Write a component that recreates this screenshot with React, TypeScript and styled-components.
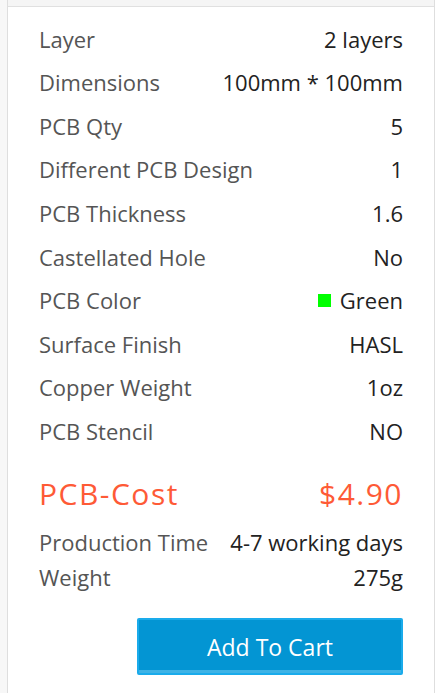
import React from "react";
import styled, { createGlobalStyle } from "styled-components";

const Global = createGlobalStyle`
  html, body { margin: 0; padding: 0; background: #ffffff; }
  body { font-family: "Open Sans", "Liberation Sans", sans-serif; }
`;

const Page = styled.div`
  display: flex;
  min-height: 693px;
  background: linear-gradient(to right, #f7f7f7 0, #f7f7f7 7px, #ffffff 7px);
`;

const Card = styled.div`
  margin-left: 7px;
  width: 426px;
  min-height: 693px;
  border-left: 1px solid #dedede;
  border-right: 1px solid #dedede;
  background: #ffffff;
  display: flex;
  flex-direction: column;
`;

const TopStrip = styled.div`
  height: 6px;
  background: #f5f5f5;
  border-bottom: 1px solid #e0e0e0;
`;

const Body = styled.div`
  padding: 10px 31px 0 31px;
  display: flex;
  flex-direction: column;
`;

const Row = styled.div`
  display: flex;
  justify-content: space-between;
  align-items: center;
  height: 43.55px;
  font-size: 22px;
`;

const Label = styled.span`
  color: #555555;
`;

const Value = styled.span`
  color: #222222;
  display: inline-flex;
  align-items: center;
  gap: 9px;
`;

const Swatch = styled.span<{ $color: string }>`
  width: 13px;
  height: 13px;
  background: ${(p) => p.$color};
  display: inline-block;
`;

const CostRow = styled.div`
  display: flex;
  justify-content: space-between;
  align-items: center;
  margin-top: 16px;
  height: 50px;
  font-size: 30px;
  color: #fe5a36;
  letter-spacing: 1.5px;
`;

const InfoList = styled.div`
  display: flex;
  flex-direction: column;
  margin-top: 6px;
`;

const InfoRow = styled.div`
  display: flex;
  justify-content: space-between;
  align-items: center;
  height: 35px;
  font-size: 22px;
`;

const ButtonRow = styled.div`
  display: flex;
  justify-content: flex-end;
  margin-top: 24px;
`;

const CartButton = styled.button`
  width: 266px;
  height: 57px;
  border: 2px solid #1aabeb;
  border-radius: 2px;
  background: #0395d3;
  box-shadow: inset 0 -3px 0 #3eb3e6;
  color: #ffffff;
  font-family: "Open Sans", "Liberation Sans", sans-serif;
  font-size: 23px;
  padding: 0;
  cursor: pointer;
`;

const specs: { label: string; value: string; swatch?: string }[] = [
  { label: "Layer", value: "2 layers" },
  { label: "Dimensions", value: "100mm * 100mm" },
  { label: "PCB Qty", value: "5" },
  { label: "Different PCB Design", value: "1" },
  { label: "PCB Thickness", value: "1.6" },
  { label: "Castellated Hole", value: "No" },
  { label: "PCB Color", value: "Green", swatch: "#00ff00" },
  { label: "Surface Finish", value: "HASL" },
  { label: "Copper Weight", value: "1oz" },
  { label: "PCB Stencil", value: "NO" },
];

export default function App() {
  return (
    <>
      <Global />
      <Page>
        <Card>
          <TopStrip />
          <Body>
            {specs.map((s) => (
              <Row key={s.label}>
                <Label>{s.label}</Label>
                <Value>
                  {s.swatch && <Swatch $color={s.swatch} />}
                  {s.value}
                </Value>
              </Row>
            ))}
            <CostRow>
              <span>PCB-Cost</span>
              <span>$4.90</span>
            </CostRow>
            <InfoList>
              <InfoRow>
                <Label>Production Time</Label>
                <Value>4-7 working days</Value>
              </InfoRow>
              <InfoRow>
                <Label>Weight</Label>
                <Value>275g</Value>
              </InfoRow>
            </InfoList>
            <ButtonRow>
              <CartButton>Add To Cart</CartButton>
            </ButtonRow>
          </Body>
        </Card>
      </Page>
    </>
  );
}
